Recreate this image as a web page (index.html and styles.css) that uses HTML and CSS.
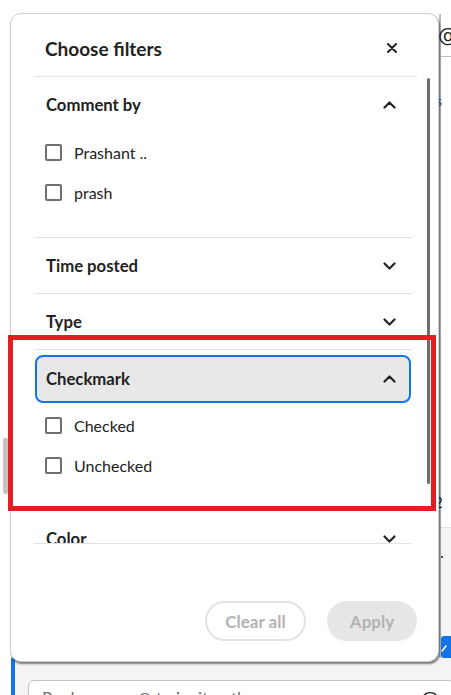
FILE: index.html
```html
<!DOCTYPE html>
<html lang="en">
<head>
<meta charset="utf-8">
<title>Choose filters</title>
<link rel="stylesheet" href="styles.css">
</head>
<body>
<div class="app">
  <div class="app-main">
    <div class="left-rail"><div class="rail-thumb"></div></div>
    <div class="app-content"></div>
    <div class="side-panel">
      <div class="side-at">@</div>
      <div class="side-rule"></div>
      <div class="side-link">s</div>
      <div class="side-num">2</div>
      <div class="side-grey">
        <div class="side-dot"></div>
        <div class="side-btn">
          <svg width="10" height="22" viewBox="0 0 10 22"><path d="M1 15 L5 10" stroke="#fff" stroke-width="1.6" stroke-linecap="round"/></svg>
        </div>
      </div>
    </div>
  </div>
  <div class="composer">
    <div class="composer-input">
      <span class="composer-ph">Reply or use @ to invite others</span>
      <span class="composer-at">@</span>
    </div>
  </div>
</div>

<div class="dialog" role="dialog" aria-label="Choose filters">
  <div class="dlg-head">
    <h2 class="dlg-title">Choose filters</h2>
    <button class="close-btn" aria-label="Close">
      <svg width="10" height="10" viewBox="0 0 10 10"><path d="M1 1 L9 9 M9 1 L1 9" stroke="#222" stroke-width="2" stroke-linecap="round"/></svg>
    </button>
  </div>
  <div class="dlg-body">
    <div class="scroll">
      <section class="acc">
        <div class="acc-head"><span>Comment by</span>
          <svg class="chev" width="13" height="8" viewBox="0 0 13 8"><path d="M1.5 6.5 L6.5 1.5 L11.5 6.5" fill="none" stroke="#222" stroke-width="2.2" stroke-linecap="round" stroke-linejoin="round"/></svg>
        </div>
        <div class="acc-list">
          <label class="opt"><span class="box"></span><span>Prashant ..</span></label>
          <label class="opt"><span class="box"></span><span>prash</span></label>
        </div>
      </section>
      <section class="acc">
        <div class="acc-head"><span>Time posted</span>
          <svg class="chev" width="13" height="8" viewBox="0 0 13 8"><path d="M1.5 1.5 L6.5 6.5 L11.5 1.5" fill="none" stroke="#222" stroke-width="2.2" stroke-linecap="round" stroke-linejoin="round"/></svg>
        </div>
      </section>
      <section class="acc">
        <div class="acc-head"><span>Type</span>
          <svg class="chev" width="13" height="8" viewBox="0 0 13 8"><path d="M1.5 1.5 L6.5 6.5 L11.5 1.5" fill="none" stroke="#222" stroke-width="2.2" stroke-linecap="round" stroke-linejoin="round"/></svg>
        </div>
      </section>
      <section class="acc">
        <div class="acc-head focused"><span>Checkmark</span>
          <svg class="chev" width="13" height="8" viewBox="0 0 13 8"><path d="M1.5 6.5 L6.5 1.5 L11.5 6.5" fill="none" stroke="#222" stroke-width="2.2" stroke-linecap="round" stroke-linejoin="round"/></svg>
        </div>
        <div class="acc-list">
          <label class="opt"><span class="box"></span><span>Checked</span></label>
          <label class="opt"><span class="box"></span><span>Unchecked</span></label>
        </div>
      </section>
      <section class="acc">
        <div class="acc-head"><span>Color</span>
          <svg class="chev" width="13" height="8" viewBox="0 0 13 8"><path d="M1.5 1.5 L6.5 6.5 L11.5 1.5" fill="none" stroke="#222" stroke-width="2.2" stroke-linecap="round" stroke-linejoin="round"/></svg>
        </div>
      </section>
    </div>
    <div class="scrollbar"><div class="scroll-thumb"></div></div>
  </div>
  <div class="dlg-foot">
    <button class="btn btn-outline" disabled>Clear all</button>
    <button class="btn btn-fill" disabled>Apply</button>
  </div>
</div>

<div class="highlight"></div>
</body>
</html>
```

FILE: styles.css
```css
* { box-sizing: border-box; }
html, body { margin: 0; padding: 0; }
body {
  width: 451px;
  height: 695px;
  overflow: hidden;
  position: relative;
  background: #ffffff;
  font-family: "Lato", "Noto Sans", sans-serif;
  color: #222222;
}

/* background application */
.app {
  display: flex;
  flex-direction: column;
  height: 695px;
}
.app-main {
  flex: 1;
  display: flex;
}
.left-rail {
  width: 11px;
  padding-top: 438px;
  padding-left: 3px;
}
.rail-thumb {
  width: 5px;
  height: 56px;
  background: #c4c4c4;
  border-radius: 2px;
}
.app-content { flex: 1; }
.side-panel {
  width: 12px;
  border-left: 2px solid #bcbcbc;
  margin-top: 14px;
  display: flex;
  flex-direction: column;
}
.side-at {
  font-family: "DejaVu Sans", sans-serif;
  font-size: 20px;
  line-height: 24px;
  margin-top: 9px;
  margin-left: -3px;
  color: #222;
}
.side-rule {
  height: 1px;
  background: #bdbdbd;
  margin-top: 9px;
}
.side-link {
  margin-top: 36px;
  font-size: 14px;
  line-height: 16px;
  color: #2b5797;
  margin-left: -5px;
}
.side-num {
  margin-top: 384px;
  font-size: 15px;
  line-height: 18px;
  color: #222;
  margin-left: -7px;
}
.side-grey {
  flex: 1;
  margin-top: 16px;
  border-top: 1px solid #e2e2e2;
  background: #f5f5f5;
  display: flex;
  flex-direction: column;
}
.side-dot {
  width: 2px;
  height: 2px;
  background: #555;
  margin-top: 28px;
}
.side-btn {
  margin-top: 78px;
  height: 22px;
  background: #1473e6;
  border-radius: 3px 0 0 3px;
  display: flex;
}
.composer {
  height: 40px;
  margin-left: 11px;
  border-left: 4px solid #1473e6;
  background: #f4f4f4;
  padding: 22px 0 0 13px;
}
.composer-input {
  height: 40px;
  margin-right: -4px;
  background: #ffffff;
  border: 1px solid #c2c2c2;
  border-radius: 6px;
  padding: 7px 14px 0 13px;
  display: flex;
  justify-content: space-between;
  font-size: 17px;
  color: #707070;
}
.composer-at {
  font-family: "DejaVu Sans", sans-serif;
  font-size: 20px;
  color: #222;
  margin-top: -1px;
}

/* dialog */
.dialog {
  position: absolute;
  left: 10px;
  top: 13px;
  width: 429px;
  height: 649px;
  background: #ffffff;
  border: 1px solid #cfcfcf;
  border-radius: 11px;
  box-shadow: 1px 2px 2px rgba(0, 0, 0, 0.5);
  display: flex;
  flex-direction: column;
}
.dlg-head {
  height: 63px;
  margin: 0 21px 0 23px;
  padding: 6px 20px 0 11px;
  border-bottom: 1px solid #e2e2e2;
  display: flex;
  align-items: center;
  justify-content: space-between;
}
.dlg-title {
  margin: 0;
  font-size: 19px;
  font-weight: 700;
  color: #222;
}
.close-btn {
  border: 0;
  background: none;
  padding: 0;
  width: 10px;
  height: 10px;
  display: flex;
}
.dlg-body {
  display: flex;
  height: 467px;
}
.scroll {
  margin-left: 23px;
  width: 378px;
  height: 467px;
  overflow: hidden;
  border-bottom: 1px solid #e2e2e2;
}
.scrollbar {
  margin-left: 15px;
  width: 3px;
  padding-top: 1px;
}
.scroll-thumb {
  height: 406px;
  background: #6e6e6e;
  border-radius: 2px;
}
.acc { border-bottom: 1px solid #e2e2e2; }
.acc-head {
  height: 55px;
  padding: 0 16px 0 12px;
  display: flex;
  align-items: center;
  justify-content: space-between;
  font-size: 16.7px;
  font-weight: 700;
  color: #222;
}
.acc-head.focused {
  height: 48px;
  margin: 5px 1px 2px;
  padding: 0 13px 0 9px;
  background: #e8e8e8;
  border: 2px solid #1473e6;
  border-radius: 8px;
}
.acc-list {
  padding-bottom: 25px;
}
.opt {
  height: 40px;
  padding-left: 11px;
  display: flex;
  align-items: center;
  gap: 12px;
  font-size: 16px;
  color: #222;
}
.box {
  width: 17px;
  height: 17px;
  border: 2px solid #6e6e6e;
  border-radius: 2px;
  background: #fff;
}
.dlg-foot {
  flex: 1;
  display: flex;
  justify-content: flex-end;
  align-items: flex-start;
  gap: 21px;
  padding: 57px 21px 0 0;
}
.btn {
  height: 40px;
  border-radius: 20px;
  font-family: inherit;
  font-size: 17px;
  font-weight: 700;
  color: #b3b3b3;
  padding: 0;
}
.btn-outline {
  width: 101px;
  background: #ffffff;
  border: 2px solid #e3e3e3;
}
.btn-fill {
  width: 90px;
  background: #e6e6e6;
  border: 0;
}

/* annotation overlay */
.highlight {
  position: absolute;
  left: 8px;
  top: 335px;
  width: 428px;
  height: 176px;
  border: 5px solid #e21e22;
  pointer-events: none;
}
```
